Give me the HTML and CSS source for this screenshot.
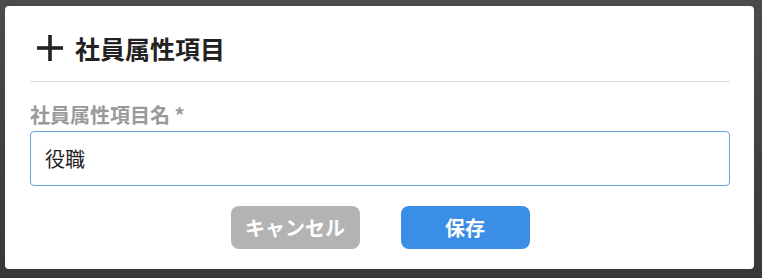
FILE: index.html
```html
<!DOCTYPE html>
<html lang="ja">
<head>
  <meta charset="UTF-8" />
  <meta name="viewport" content="width=device-width, initial-scale=1" />
  <title>社員属性項目</title>
  <link rel="stylesheet" href="styles.css">
</head>
<body>
  <div class="overlay">
    <div class="modal">
      <div class="modal-header">
        <svg class="icon-add" width="26" height="26" viewBox="0 0 26 26" aria-hidden="true">
          <rect x="11.2" y="0" width="3.6" height="26" fill="#222" />
          <rect x="0" y="11.2" width="26" height="3.6" fill="#222" />
        </svg>
        <h1 class="modal-title">社員属性項目</h1>
      </div>

      <div class="form-group">
        <label class="form-label" for="attrName">社員属性項目名 *</label>
        <input class="form-input" id="attrName" type="text" value="役職" />
      </div>

      <div class="modal-actions">
        <button class="btn btn-cancel" type="button">キャンセル</button>
        <button class="btn btn-save" type="button">保存</button>
      </div>
    </div>
  </div>
</body>
</html>
```

FILE: styles.css
```css
body {
  margin: 0;
  padding: 0;
  font-family: 'Noto Sans CJK JP', 'Noto Sans', sans-serif;
  background: linear-gradient(#4b4b4b, #383838);
  height: 278px;
  overflow: hidden;
}

.overlay {
  padding: 6px 8px 9px 5px;
}

.modal {
  width: 749px;
  height: 263px;
  box-sizing: border-box;
  background-color: #fff;
  border-radius: 4px;
  padding: 24px 24px 20px 25px;
}

.modal-header {
  display: flex;
  align-items: center;
  gap: 12px;
  height: 36px;
  padding: 0 0 15px 7px;
  border-bottom: 1px solid #d9d9d9;
}

.icon-add {
  flex: none;
}

.modal-title {
  margin: 0;
  font-size: 25px;
  line-height: 36px;
  font-weight: bold;
  color: #222;
}

.form-group {
  margin-top: 19px;
}

.form-label {
  display: block;
  font-size: 20px;
  line-height: 28px;
  font-weight: bold;
  color: #999;
  margin-bottom: 2px;
}

.form-input {
  display: block;
  width: 100%;
  height: 55px;
  box-sizing: border-box;
  padding: 0 14px;
  border: 1px solid #6ba6e4;
  border-radius: 4px;
  font-family: inherit;
  font-size: 20px;
  color: #222;
  outline: none;
}

.modal-actions {
  display: flex;
  justify-content: center;
  gap: 41px;
  margin-top: 20px;
}

.btn {
  width: 129px;
  height: 43px;
  border: none;
  border-radius: 8px;
  font-family: inherit;
  font-size: 20px;
  font-weight: bold;
  color: #fff;
  cursor: pointer;
}

.btn-cancel {
  background-color: #b3b3b3;
}

.btn-save {
  background-color: #3a8ee5;
}
```
